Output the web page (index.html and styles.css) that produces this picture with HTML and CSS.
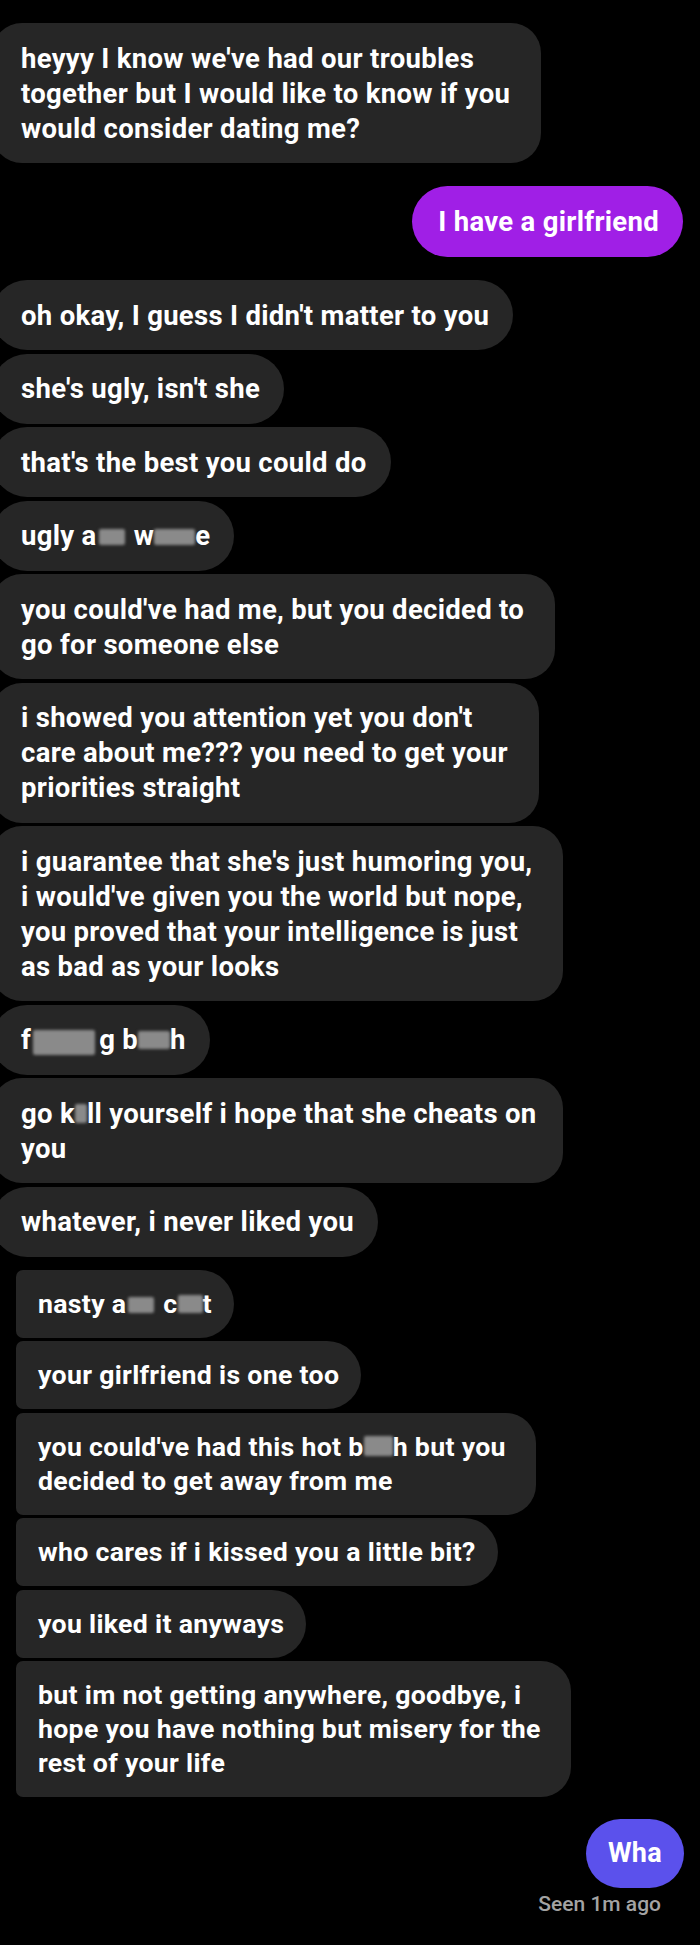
FILE: index.html
```html
<!DOCTYPE html>
<html lang="en">
<head>
<meta charset="utf-8">
<title>Chat</title>
<link rel="stylesheet" href="styles.css">
</head>
<body>
<div class="chat">
  <div class="group g1 top">
    <div class="bubble multi">heyyy I know we've had our troubles<br>together but I would like to know if you<br>would consider dating me?</div>
  </div>

  <div class="out purple">I have a girlfriend</div>

  <div class="group g1">
    <div class="bubble">oh okay, I guess I didn't matter to you</div>
    <div class="bubble">she's ugly, isn't she</div>
    <div class="bubble">that's the best you could do</div>
    <div class="bubble">ugly a<span class="blur b-ss"></span> w<span class="blur b-hor"></span>e</div>
    <div class="bubble multi">you could've had me, but you decided to<br>go for someone else</div>
    <div class="bubble multi">i showed you attention yet you don't<br>care about me??? you need to get your<br>priorities straight</div>
    <div class="bubble multi">i guarantee that she's just humoring you,<br>i would've given you the world but nope,<br>you proved that your intelligence is just<br>as bad as your looks</div>
    <div class="bubble">f<span class="blur b-tall"></span>g b<span class="blur b-it"></span>h</div>
    <div class="bubble multi tight">go k<span class="blur b-i"></span>ll yourself i hope that she cheats on<br>you</div>
    <div class="bubble">whatever, i never liked you</div>
  </div>

  <div class="group g2">
    <div class="bubble">nasty a<span class="blur b-ss2"></span> c<span class="blur b-un"></span>t</div>
    <div class="bubble">your girlfriend is one too</div>
    <div class="bubble multi">you could've had this hot b<span class="blur b-itc"></span>h but you<br>decided to get away from me</div>
    <div class="bubble">who cares if i kissed you a little bit?</div>
    <div class="bubble">you liked it anyways</div>
    <div class="bubble multi">but im not getting anywhere, goodbye, i<br>hope you have nothing but misery for the<br>rest of your life</div>
  </div>

  <div class="out blue">Wha</div>
  <div class="seen">Seen 1m ago</div>
</div>
</body>
</html>
```

FILE: styles.css
```css
html, body {
  margin: 0;
  padding: 0;
  background: #000;
}

body {
  width: 700px;
  height: 1945px;
  overflow: hidden;
  font-family: Roboto, "Noto Sans", "Liberation Sans", sans-serif;
  color: #fff;
}

.chat {
  display: flex;
  flex-direction: column;
  padding-top: 23px;
}

.group {
  display: flex;
  flex-direction: column;
  align-items: flex-start;
  gap: 3.5px;
}

.g1 .bubble {
  margin-left: -8px;
  padding: 17.5px 24px 17.5px 29px;
  font-size: 27.5px;
  line-height: 35px;
  border-radius: 35px;
}

.g1 .bubble.multi {
  padding-right: 31px;
  border-radius: 30px;
}

.g1 .bubble.tight {
  padding-right: 26px;
}

.g1.top {
  margin-bottom: 23px;
}

.g2 {
  margin-top: 13px;
}

.g2 .bubble {
  margin-left: 16px;
  padding: 17px 22px 17px 22px;
  font-size: 26.7px;
  line-height: 34px;
  border-radius: 7px 34px 34px 7px;
}

.g2 .bubble.multi {
  padding-right: 30px;
  border-radius: 7px 30px 30px 7px;
}

.bubble {
  background: #262626;
  font-weight: 700;
  letter-spacing: 0.3px;
  white-space: nowrap;
}

.out {
  align-self: flex-end;
  margin-right: 17px;
  padding: 18px 24px 18px 26px;
  font-size: 27.5px;
  line-height: 35px;
  font-weight: 700;
  letter-spacing: 0.3px;
  border-radius: 36px;
  white-space: nowrap;
}

.purple {
  background: #a01fe6;
  margin-bottom: 23px;
}

.blue {
  background: #5b51ec;
  margin-top: 22px;
  margin-right: 16px;
  padding: 17px 22px 17px 22px;
  font-size: 27px;
}

.seen {
  align-self: flex-end;
  margin-right: 39px;
  margin-top: 4px;
  font-size: 21px;
  line-height: 24px;
  font-weight: 500;
  color: #a3a3a3;
}

.blur {
  display: inline-block;
  vertical-align: baseline;
  height: 16px;
  background: #8a8a8a;
  filter: blur(1.5px);
  border-radius: 2px;
}

.b-ss { width: 26px; margin: 0 2px; }
.b-hor { width: 41px; }
.b-tall { width: 62px; height: 25px; margin: 0 4px 0 2px; vertical-align: -6px; }
.b-it { width: 32px; height: 18px; }
.b-i { width: 12px; height: 19px; }
.b-ss2 { width: 26px; margin: 0 2px; }
.b-un { width: 25px; height: 18px; }
.b-itc { width: 29px; height: 20px; }
```
